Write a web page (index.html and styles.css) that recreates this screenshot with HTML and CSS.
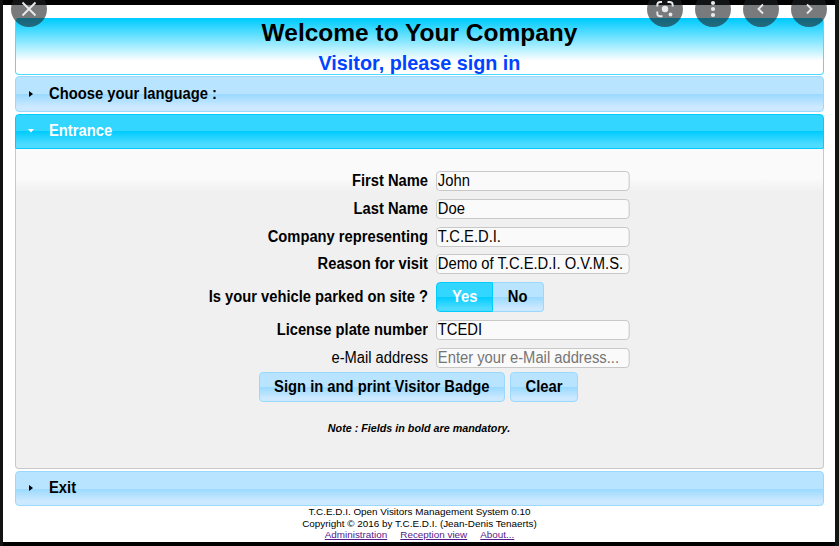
FILE: index.html
```html
<!DOCTYPE html>
<html lang="en">
<head>
<meta charset="utf-8">
<title>Visitor sign in</title>
<link rel="stylesheet" href="styles.css">
</head>
<body>
<main class="page">
  <header class="banner">
    <h1>Welcome to Your Company</h1>
    <h2>Visitor, please sign in</h2>
  </header>
  <div class="bar bar-language"><svg class="arrow" viewBox="0 0 6 6"><path d="M1 0L5 3L1 6Z"/></svg><span>Choose your language :</span></div>
  <div class="bar bar-active"><svg class="arrow" viewBox="0 0 6 6"><path d="M0 1H6L3 4.5Z"/></svg><span>Entrance</span></div>
  <section class="panel">
    <form class="form">
      <div class="row"><label for="first">First Name</label><input id="first" value="John"></div>
      <div class="row"><label for="last">Last Name</label><input id="last" value="Doe"></div>
      <div class="row"><label for="company">Company representing</label><input id="company" value="T.C.E.D.I."></div>
      <div class="row"><label for="reason">Reason for visit</label><input id="reason" value="Demo of T.C.E.D.I. O.V.M.S."></div>
      <div class="row row-choice"><label>Is your vehicle parked on site ?</label><div class="choice"><button type="button" class="yes"><span>Yes</span></button><button type="button" class="no"><span>No</span></button></div></div>
      <div class="row"><label for="plate">License plate number</label><input id="plate" value="TCEDI"></div>
      <div class="row"><label class="optional" for="mail">e-Mail address</label><input id="mail" placeholder="Enter your e-Mail address..."></div>
      <div class="actions"><button type="button" class="submit"><span>Sign in and print Visitor Badge</span></button><button type="button" class="clear"><span>Clear</span></button></div>
    </form>
    <p class="note">Note : Fields in bold are mandatory.</p>
  </section>
  <div class="bar"><svg class="arrow" viewBox="0 0 6 6"><path d="M1 0L5 3L1 6Z"/></svg><span>Exit</span></div>
  <footer>
    <div>T.C.E.D.I. Open Visitors Management System 0.10</div>
    <div>Copyright © 2016 by T.C.E.D.I. (Jean-Denis Tenaerts)</div>
    <nav><a href="#admin">Administration</a><a href="#reception">Reception view</a><a href="#about">About...</a></nav>
  </footer>
</main>
<div class="overlay">
  <svg class="round close" viewBox="0 0 36 36"><path d="M11.5 11.5L24.5 24.5M24.5 11.5L11.5 24.5"/></svg>
  <svg class="round" viewBox="0 0 36 36"><path d="M10.3 15.5V14Q10.3 11 13.3 11H15M20.5 11H22.5Q25.7 11 25.7 14V15.5M10.3 20.5V22.5Q10.3 25.3 13.3 25.3H15.5"/><circle cx="18" cy="18" r="3.2"/><circle cx="23.5" cy="23.5" r="1.9"/></svg>
  <svg class="round" viewBox="0 0 36 36"><circle cx="18" cy="12" r="2.1"/><circle cx="18" cy="18" r="2.1"/><circle cx="18" cy="24" r="2.1"/></svg>
  <svg class="round" viewBox="0 0 36 36"><path d="M20 13.5L15.5 18L20 22.5"/></svg>
  <svg class="round" viewBox="0 0 36 36"><path d="M16 13.5L20.5 18L16 22.5"/></svg>
</div>
</body>
</html>
```
FILE: styles.css
```css
* { box-sizing: border-box; }
body {
  margin: 0;
  height: 546px;
  overflow: hidden;
  padding: 5px 4px 4px 3px;
  background: linear-gradient(#000, #000) 3px 0 / 832px 546px no-repeat, #131313;
  font-family: "Liberation Sans", Arial, sans-serif;
  font-size: 16px;
}
.page {
  height: 537px;
  padding: 13px 11px 0 12px;
  background: #fff;
  display: flex;
  flex-direction: column;
}
.banner {
  height: 57px;
  flex: none;
  border: 1px solid #4ddcff;
  border-top-color: #00ccff;
  border-radius: 4px;
  background: linear-gradient(#00ccff, #fff 42px);
  text-align: center;
}
h1, h2 { margin: 0; font-weight: bold; }
h1 { font-size: 24.5px; line-height: 28px; }
h2 { font-size: 19.8px; line-height: 22px; color: #0044ff; margin-top: 5px; }
.bar {
  height: 35px;
  flex: none;
  display: flex;
  align-items: center;
  padding: 0 0 1px 12px;
  border: 1px solid #99d9ff;
  border-radius: 4px;
  background: linear-gradient(#b8e4ff 50%, #99d9ff 50%, #cce9ff 88%);
  font-weight: bold;
}
.bar span { transform: scaleX(.922); transform-origin: left; }
.bar-language { height: 36px; margin: 1px 0 2px; padding-bottom: 0; }
.bar-active {
  color: #fff;
  border-color: #00ccff;
  border-radius: 4px 4px 0 0;
  background: linear-gradient(#33d6ff 50%, #00ccff 50%, #4ddbff 88%);
}
.arrow { width: 6px; height: 6px; margin-right: 15px; fill: currentColor; }
.panel {
  height: 320px;
  flex: none;
  margin-bottom: 2px;
  padding-top: 22px;
  border: 1px solid #c8c8c8;
  border-top: 0;
  border-radius: 0 0 4px 4px;
  background: linear-gradient(#fafafa 29px, #f0f0f0 43px);
}
.form { display: flex; flex-direction: column; }
.row {
  height: 20px;
  margin-bottom: 7.8px;
  display: grid;
  grid-template-columns: 412px 194px;
  column-gap: 8px;
  align-items: center;
}
label { text-align: right; font-weight: bold; transform: scaleX(.92); transform-origin: right; }
.optional { font-weight: normal; }
input {
  width: 210px;
  height: 20px;
  padding: 0 1px;
  border: 1px solid #c6c6c6;
  border-radius: 4px;
  background: #fafafa;
  color: #000;
  font: 16px "Liberation Sans", Arial, sans-serif;
  transform: scaleX(.922);
  transform-origin: left;
}
input::placeholder { color: #757575; }
.row-choice { height: 30px; }
.choice { display: flex; }
button {
  height: 30px;
  padding: 0;
  display: flex;
  align-items: center;
  justify-content: center;
  white-space: nowrap;
  border: 1px solid #99d9ff;
  border-radius: 4px;
  background: linear-gradient(#b8e4ff 50%, #99d9ff 50%, #cce9ff 90%);
  color: #000;
  font: bold 16px "Liberation Sans", Arial, sans-serif;
}
button span { transform: scaleX(.922); }
.yes {
  width: 57px;
  border-color: #00ccff;
  border-radius: 4px 0 0 4px;
  background: linear-gradient(#33d6ff 50%, #00ccff 50%, #4ddbff 90%);
  color: #fff;
}
.no { width: 51px; border-left: 0; border-radius: 0 4px 4px 0; }
.actions { display: flex; gap: 5px; margin: -4px 0 0 243px; }
.submit { width: 246px; }
.clear { width: 68px; }
.note {
  margin: 19px 0 0;
  padding-right: 1px;
  text-align: center;
  font: italic bold 10.75px/14px "Liberation Sans", Arial, sans-serif;
}
footer { font-size: 9.9px; line-height: 11.5px; text-align: center; }
nav { display: flex; justify-content: center; gap: 13px; }
a { color: #551a8b; }
.overlay {
  position: absolute;
  top: -9px;
  left: 11px;
  display: flex;
  gap: 12px;
}
.round {
  width: 36px;
  height: 36px;
  border-radius: 50%;
  background: rgba(32, 33, 36, .6);
  fill: #e8eaed;
}
.round path { fill: none; stroke: #e8eaed; stroke-width: 1.9; }
.close { margin-right: 588px; }
```
